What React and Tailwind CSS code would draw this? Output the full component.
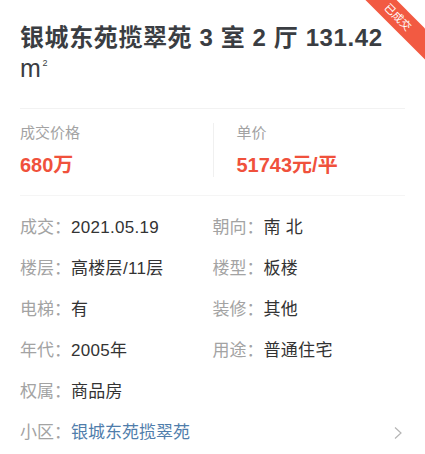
import React from 'react';

const font = { fontFamily: '"Liberation Sans", "Noto Sans CJK SC", sans-serif' };

const rows = [
  [['成交', '2021.05.19'], ['朝向', '南 北']],
  [['楼层', '高楼层/11层'], ['楼型', '板楼']],
  [['电梯', '有'], ['装修', '其他']],
  [['年代', '2005年'], ['用途', '普通住宅']],
];

const Field = ({ label, value }) => (
  <div className="flex items-center text-[17px] leading-[41px]">
    <span className="text-[#a3a3a3]">{label}：</span>
    <span className="text-[#333333] tracking-[0.3px]">{value}</span>
  </div>
);

export default function App() {
  return (
    <div className="relative w-[425px] h-[454px] overflow-hidden bg-white" style={font}>
      {/* corner ribbon */}
      <div className="absolute -right-[38px] top-[6px] w-[130px] h-[22px] rotate-45 bg-[#f25a42] flex items-center justify-center">
        <span className="text-white text-[11px] leading-none">已成交</span>
      </div>

      <div className="px-5 pt-[22px] pb-[24px]">
        <h1 className="text-[24px] leading-[31px] font-bold text-[#3a3d42] tracking-[0.6px]">
          银城东苑揽翠苑 3 室 2 厅 131.42
          <br />
          <span className="font-normal text-[25px]">m<sup className="text-[9px] -top-[11px] ml-[1px]">2</sup></span>
        </h1>
      </div>

      <div className="mx-5 h-px bg-[#f2f2f2]" />

      <div className="mx-5 grid grid-cols-2 pt-[14px] pb-[18px]">
        <div className="flex flex-col">
          <span className="text-[15px] leading-[20px] text-[#a3a3a3]">成交价格</span>
          <span className="mt-[10px] text-[20px] leading-[24px] font-bold text-[#f0513c]">680万</span>
        </div>
        <div className="flex flex-col border-l border-[#f0f0f0] pl-[23px]">
          <span className="text-[15px] leading-[20px] text-[#a3a3a3]">单价</span>
          <span className="mt-[10px] text-[20px] leading-[24px] font-bold text-[#f0513c]">51743元/平</span>
        </div>
      </div>

      <div className="mx-5 h-px bg-[#f5f5f5]" />

      <div className="mx-5 pt-[11px]">
        {rows.map((r, i) => (
          <div key={i} className="grid grid-cols-2">
            <Field label={r[0][0]} value={r[0][1]} />
            <Field label={r[1][0]} value={r[1][1]} />
          </div>
        ))}
        <Field label="权属" value="商品房" />
        <div className="flex items-center justify-between text-[17px] leading-[41px]">
          <div>
            <span className="text-[#a3a3a3]">小区：</span>
            <span className="text-[#4f7dab]">银城东苑揽翠苑</span>
          </div>
          <svg width="10" height="14" viewBox="0 0 10 14" className="mr-[2px]">
            <path d="M2 1.5 L8 7 L2 12.5" fill="none" stroke="#b5b5b5" strokeWidth="1.2" />
          </svg>
        </div>
      </div>
    </div>
  );
}
